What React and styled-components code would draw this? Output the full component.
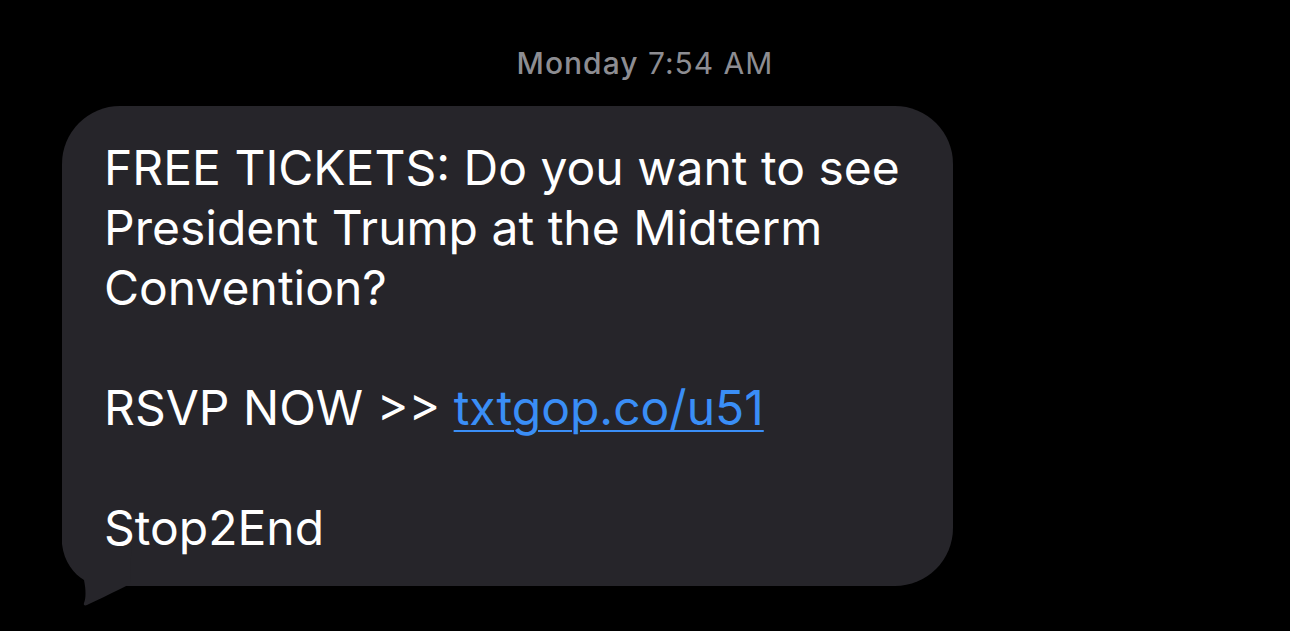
import React from 'react';
import styled, { createGlobalStyle } from 'styled-components';

const GlobalStyle = createGlobalStyle`
  html, body {
    margin: 0;
    padding: 0;
    background: #000;
  }
  body {
    font-family: Inter, "Noto Sans", "Liberation Sans", sans-serif;
    -webkit-font-smoothing: antialiased;
  }
`;

const Screen = styled.div`
  width: 1290px;
  height: 631px;
  background: #000;
  overflow: hidden;
  display: flex;
  flex-direction: column;
`;

const Stamp = styled.div`
  padding-top: 45px;
  height: 60px;
  box-sizing: border-box;
  text-align: center;
  font-size: 30px;
  line-height: 36px;
  color: #8d8d92;
  letter-spacing: 1px;
  b {
    font-weight: 500;
  }
`;

const Row = styled.div`
  margin-top: 46px;
  padding-left: 62px;
  display: flex;
`;

const Bubble = styled.div`
  position: relative;
  width: 891px;
  box-sizing: border-box;
  padding: 32px 40px 28px 42px;
  background: #26252a;
  border-radius: 58px;
  color: #fff;
  font-size: 48px;
  line-height: 60px;
  letter-spacing: 0;
  white-space: pre-wrap;
`;

const Text = styled.div`
  position: relative;
  z-index: 1;
`;

const Tail = styled.svg`
  position: absolute;
  z-index: 0;
  left: 0;
  bottom: -22px;
  width: 80px;
  height: 80px;
`;

const Link = styled.a`
  color: #3a8ef6;
  text-decoration: underline;
  text-decoration-thickness: 2px;
  text-underline-offset: 5px;
`;

export default function App() {
  return (
    <Screen>
      <GlobalStyle />
      <Stamp>
        <b>Monday</b> 7:54 AM
      </Stamp>
      <Row>
        <Bubble>
          <Tail viewBox="0 0 80 80">
            <path
              d="M0 0 L0 16 C2 34 12 46 22 52 C24 62 24 70 22 75 C21 78 24 78 27 76 C40 70 52 64 68 56 L70 0 Z"
              fill="#26252a"
            />
          </Tail>
          <Text>
            {'FREE TICKETS: Do you want to see\nPresident Trump at the Midterm\nConvention?\n\nRSVP NOW >> '}
            <Link href="#">txtgop.co/u51</Link>
            {'\n\nStop2End'}
          </Text>
        </Bubble>
      </Row>
    </Screen>
  );
}
